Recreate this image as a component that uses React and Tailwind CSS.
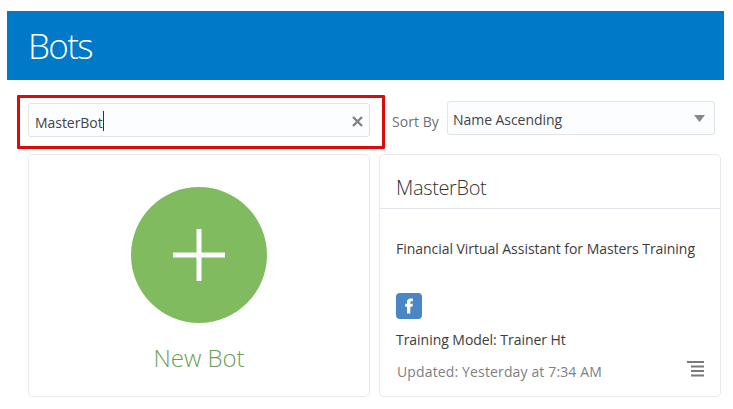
function Header() {
  return (
    <header className="ml-[7px] flex h-[69px] w-[717px] items-center bg-[#007ac8] pl-[21px]">
      <h1 className="pt-px text-[35px] leading-[40px] font-light tracking-[-1.6px] text-white">Bots</h1>
    </header>
  );
}

function SearchBox() {
  return (
    <div className="h-[54px] w-[368px] rounded-[1px] border-[3px] border-[#dc0a0a] px-2 pt-[5px]">
      <div className="flex h-[34px] w-[342px] items-center rounded-[3px] border border-[#dfe4e7] bg-[#fcfdfe] pr-[6px] pl-[6px]">
        <span className="pt-[5px] text-[14px] leading-5 tracking-[-0.05px] text-[#444444]">MasterBot</span>
        <span className="mt-[2px] h-5 w-px bg-[#333333]" />
        <svg className="mt-[3px] ml-auto" width="11" height="11" viewBox="0 0 11 11" stroke="#7f8388" strokeWidth="2.4">
          <path d="M1 1L10 10M10 1L1 10" />
        </svg>
      </div>
    </div>
  );
}

function SortSelect() {
  return (
    <div className="ml-2 flex pt-[6px]">
      <span className="-ml-px w-[55px] pt-[11px] text-[14px] leading-5 tracking-[0.05px] whitespace-nowrap text-[#6d7074]">Sort By</span>
      <div className="flex h-[34px] w-[268px] items-center justify-between rounded-[3px] border border-[#dfe4e7] bg-[#fcfdfe] pr-[9px] pl-[5px]">
        <span className="pt-[4px] text-[14px] leading-5 tracking-[-0.05px] text-[#444444]">Name Ascending</span>
        <svg className="mt-px" width="11" height="7" viewBox="0 0 11 7" fill="#85888d">
          <path d="M0 0H11L5.5 7Z" />
        </svg>
      </div>
    </div>
  );
}

function NewBotCard() {
  return (
    <section className="flex h-[243px] w-[342px] flex-col items-center rounded-[5px] border border-[#e6eaed] bg-white pt-8">
      <div className="flex size-[136px] items-center justify-center rounded-full bg-[#81bb5f]">
        <svg width="52" height="52" viewBox="0 0 52 52" fill="#fff">
          <path d="M23.500 0H28.500V23.500H52V28.500H28.500V52H23.500V28.500H0V23.500H23.500Z" />
        </svg>
      </div>
      <span className="mt-[19px] text-[24px] leading-[32px] font-light text-[#6b9f58]">New Bot</span>
    </section>
  );
}

function BotCard() {
  return (
    <section className="flex h-[243px] w-[342px] flex-col rounded-[5px] border border-[#e6eaed] bg-white">
      <h2 className="h-[54px] border-b border-[#dfe5ea] pt-[19px] pl-4 text-[20px] leading-7 font-light tracking-[-0.35px] text-[#333333]">MasterBot</h2>
      <p className="mt-[30px] pl-4 text-[14px] leading-5 tracking-[-0.04px] whitespace-nowrap text-[#3c3c3c]">Financial Virtual Assistant for Masters Training</p>
      <svg className="mt-[34px] ml-4" width="26" height="26" viewBox="0 0 26 26">
        <rect width="26" height="26" rx="4" fill="#4a86c5" />
        <path fill="#fff" d="M11 20.500V13.800H9.200V10.800H11V9.200C11 6.600 12.300 5.400 14.600 5.400H16.900V8.300H15.500C14.600 8.300 14.300 8.700 14.300 9.500V10.800H16.800L16.400 13.800H14.300V20.500Z" />
      </svg>
      <p className="mt-[11px] pl-4 text-[14px] leading-5 tracking-[-0.04px] text-[#3c3c3c]">Training Model: Trainer Ht</p>
      <div className="mt-3 flex items-start justify-between pr-4 pl-[17px]">
        <span className="text-[14px] leading-5 tracking-[0.14px] text-[#7d8083]">Updated: Yesterday at 7:34 AM</span>
        <svg className="-mt-[1px]" width="17" height="16" viewBox="0 0 17 16" fill="#77797c">
          <path d="M0 0H17V2H0ZM4 4.500H17V6.500H4ZM4 9H17V11H4ZM4 13.500H17V15.500H4Z" />
        </svg>
      </div>
    </section>
  );
}

export default function App() {
  return (
    <main className="flex h-[409px] w-[733px] flex-col overflow-hidden bg-white pt-[11px] font-['Open_Sans','Noto_Sans',sans-serif]">
      <Header />
      <div className="mt-[15px] ml-[17px] flex">
        <SearchBox />
        <SortSelect />
      </div>
      <div className="mt-[5px] ml-7 flex gap-[9px]">
        <NewBotCard />
        <BotCard />
      </div>
    </main>
  );
}
